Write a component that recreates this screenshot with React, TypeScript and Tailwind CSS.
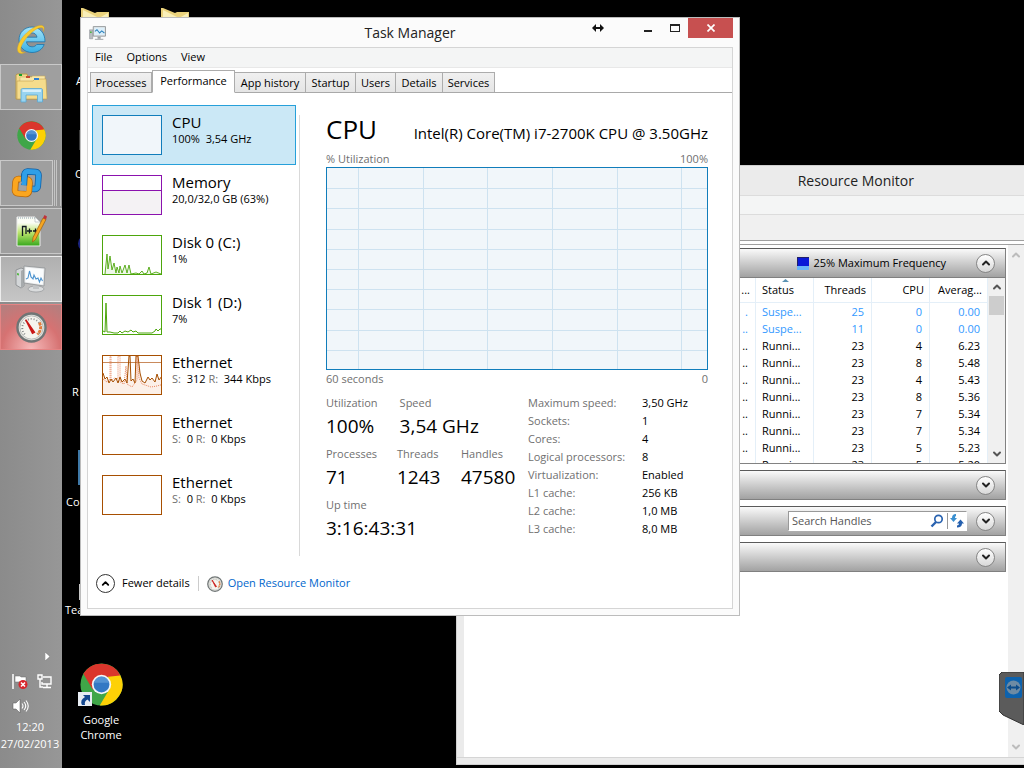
import type { ReactNode } from "react";
import { ChevronDown, ChevronUp } from "lucide-react";
import clsx from "clsx";

const MENU = ["File", "Options", "View"];

const TABS = [
  { label: "Processes", width: "w-[62px]" },
  { label: "Performance", width: "w-[83px]" },
  { label: "App history", width: "w-[71px]" },
  { label: "Startup", width: "w-[50px]" },
  { label: "Users", width: "w-10" },
  { label: "Details", width: "w-[47px]" },
  { label: "Services", width: "w-[52px]" },
];

const SPECS = [
  ["Maximum speed:", "3,50 GHz"],
  ["Sockets:", "1"],
  ["Cores:", "4"],
  ["Logical processors:", "8"],
  ["Virtualization:", "Enabled"],
  ["L1 cache:", "256 KB"],
  ["L2 cache:", "1,0 MB"],
  ["L3 cache:", "8,0 MB"],
];

const PROCESSES = [
  [".", "Suspe...", "25", "0", "0.00"],
  ["..", "Suspe...", "11", "0", "0.00"],
  ["..", "Runni...", "23", "4", "6.23"],
  ["..", "Runni...", "23", "8", "5.48"],
  ["..", "Runni...", "23", "4", "5.43"],
  ["..", "Runni...", "23", "8", "5.36"],
  ["..", "Runni...", "23", "7", "5.34"],
  ["..", "Runni...", "23", "7", "5.34"],
  ["..", "Runni...", "23", "5", "5.23"],
  ["..", "Runni...", "23", "5", "5.20"],
];

/* ---------- icons ---------- */

function IeIcon() {
  return (
    <svg width="30" height="32" viewBox="0 0 30 32">
      <defs>
        <linearGradient id="ie" x1="0" y1="0" x2="0" y2="1">
          <stop offset="0" stopColor="#a5e6fb" />
          <stop offset="1" stopColor="#3aafe4" />
        </linearGradient>
      </defs>
      <path
        d="M16 4C8.500 4 3 9.500 3 17c0 7.300 5.600 12.500 13 12.500 5.800 0 10.300-3 12.200-8h-7.500c-1 1.500-2.600 2.300-4.600 2.300-3.200 0-5.300-1.900-5.600-5H29C29.200 10.500 24 4 16 4Zm-5.300 10.200c.6-2.700 2.500-4.300 5.300-4.300 2.700 0 4.600 1.600 5 4.300Z"
        fill="url(#ie)"
        stroke="#1c75ac"
        strokeWidth=".8"
      />
      <path
        d="M27.500 8.500c1.600-4.300.1-6.600-3.700-6C17.500 3.300 8.500 10.300 4 18.200 1 23.600.6 28.500 3.400 30c1.600.8 3.800.4 6-.8-3 .6-4.900-.2-4.700-3C5 21.800 9.600 14.700 16 9.200c4.900-4.200 9.300-5.700 10.700-4.300.8.700.8 2 .8 3.600Z"
        fill="#f9cb2e"
        stroke="#d9a41c"
        strokeWidth=".4"
      />
    </svg>
  );
}

function ExplorerIcon() {
  return (
    <svg width="34" height="32" viewBox="0 0 34 32">
      <path d="M3 3h10l1 3h16v22H2V4Z" fill="#f3d98a" stroke="#b79a4c" />
      <path d="M6 6h12v-1h13v22H5Z" fill="#f9e7a8" stroke="#c9ad5e" strokeWidth=".6" />
      <path d="M3 10h16l2-2h11l1 20H3Z" fill="#f5dc8c" stroke="#bf9f4d" strokeWidth=".6" />
      <path d="M5 3h3v2H5Z" fill="#18a02c" />
      <path d="M12 5h4v2h-4Z" fill="#c94a32" />
      <path d="M20 7h5v2h-5Z" fill="#2e7fd0" />
      <path d="M7 19c0-1 .6-1.500 1.500-1.500h18.500c1 0 1.500.5 1.500 1.500v12h-5v-7H12v7H7Z" fill="#98d4f0" stroke="#5ba8d2" strokeWidth=".8" />
      <path d="M8.500 18.500h18.500v2.500H8.500Z" fill="#d5effb" />
    </svg>
  );
}

function ChromeIcon({ size }: { size: number }) {
  return (
    <svg width={size} height={size} viewBox="0 0 48 48">
      <circle cx="24" cy="24" r="23.500" fill="#3fa648" />
      <path d="M4 12A23.500 23.500 0 0 1 45 14H24L14 29Z" fill="#d93025" />
      <path d="M44.700 13A23.500 23.500 0 0 1 22 47.400L33 29 31 13Z" fill="#fdd106" />
      <path d="M4 12 14 29l5 2-3-14 28.700-3L43.500 12A23.500 23.500 0 0 0 4 12Z" fill="#da362c" />
      <circle cx="24" cy="24" r="10.800" fill="#f4f6f8" />
      <circle cx="24" cy="24" r="8.800" fill="#3378c4" />
      <path d="M15.500 22a8.800 8.800 0 0 1 17 0Z" fill="#6ba5dd" opacity=".6" />
    </svg>
  );
}

function VmwareIcon() {
  return (
    <svg width="32" height="32" viewBox="0 0 32 32" fill="none">
      <g transform="rotate(4 16 16)">
        <rect x="13" y="4.500" width="14" height="17" rx="3" stroke="#0d5fa6" strokeWidth="6.500" />
        <rect x="13" y="4.500" width="14" height="17" rx="3" stroke="#2f9fe8" strokeWidth="5" />
        <rect x="4.500" y="12.500" width="14" height="14.500" rx="3" stroke="#b8690c" strokeWidth="6.500" />
        <rect x="4.500" y="12.500" width="14" height="14.500" rx="3" stroke="#fba61f" strokeWidth="5" />
        <path d="M13 7v12" stroke="#0d5fa6" strokeWidth="6.500" />
        <path d="M13 6v12.500" stroke="#2f9fe8" strokeWidth="5" />
        <path d="M10 18.500h6V24h-7v-9h2" fill="#a3a3a3" />
      </g>
    </svg>
  );
}

function NotepadIcon() {
  return (
    <svg width="32" height="34" viewBox="0 0 32 34">
      <defs>
        <linearGradient id="npp" x1="0" y1="0" x2="0" y2="1">
          <stop offset=".2" stopColor="#fbfdf5" />
          <stop offset=".55" stopColor="#b9e36a" />
          <stop offset="1" stopColor="#35a71c" />
        </linearGradient>
      </defs>
      <path d="M2 3h18l5 5v24H2Z" fill="url(#npp)" stroke="#ececec" />
      <path d="M3 4h18" stroke="#8fa4b0" strokeDasharray="1 1" />
      <path d="M20 3v5h5Z" fill="#fff" stroke="#a9b4b4" strokeWidth=".6" />
      <path d="M7.500 22V12.500h3.500V20M12 17h5M14.500 14.500v5M18 17h5M20.500 14.500v5" stroke="#101820" strokeWidth="1.300" fill="none" />
      <path d="m17.500 28 .5-4.500L28 4l3 1.500L20.500 25.500Z" fill="#f4a622" stroke="#9a5e10" strokeWidth=".7" />
      <path d="m28 4 3 1.500 1-3L29.500 1Z" fill="#c0323b" />
    </svg>
  );
}

function TaskManagerIcon({ size }: { size: number }) {
  return (
    <svg width={size} height={size} viewBox="0 0 32 32">
      <path d="M1 9h6v17H1Z" fill="#b9bdc0" stroke="#777d80" strokeWidth=".8" />
      <path d="M2 12h3v3H2Z" fill="#46b53b" />
      <path d="M8 3h23v18H8Z" fill="#dfe3e5" stroke="#84898c" strokeWidth="1.500" />
      <path d="M10 5h19v14H10Z" fill="#dceffa" />
      <path d="m11 12 4-3 5 6 4-4 5 4" fill="none" stroke="#2d83bd" strokeWidth="2" />
      <path d="M16 22h6v4h-6Z" fill="#9ea3a6" />
      <path d="M11 26h16v2H11Z" fill="#a5aaad" />
    </svg>
  );
}

function ComputerIcon() {
  return (
    <svg width="32" height="28" viewBox="0 0 32 28">
      <path d="m1 5 5-2 3 1v17l-3 2-5-3Z" fill="#d3d6d8" stroke="#85898b" strokeWidth=".8" />
      <path d="m6 6 3-2v17l-3 2Z" fill="#a7abad" />
      <path d="m2 8 2 .5v2L2 10Z" fill="#58b947" />
      <path d="m9 1 21 2-1 18L9 18Z" fill="#e6e8e9" stroke="#8e9294" strokeWidth=".8" />
      <path d="m10.500 2.500 18 1.700-.8 15.300-17.200-2.500Z" fill="#fafcfd" />
      <path d="m11 14 2-1 1.500-7L16 12l2 2 1-4 2 4 2-1 1.500 4 1.500-4 1.500 3" fill="none" stroke="#4c93cf" strokeWidth="1.100" />
      <ellipse cx="21" cy="24" rx="8" ry="3" fill="#dadcdd" stroke="#93979a" strokeWidth=".7" />
      <path d="m18 20 6 1v3h-6Z" fill="#c1c4c6" />
    </svg>
  );
}

function GaugeIcon({ size }: { size: number }) {
  return (
    <svg width={size} height={size} viewBox="0 0 32 32">
      <circle cx="16" cy="16" r="14.500" fill="#e5e5e1" stroke="#6f7575" strokeWidth="2.500" />
      <circle cx="16" cy="16" r="12" fill="#f5f4ee" stroke="#b8bbb8" />
      <path d="M9 23a9.500 9.500 0 1 1 14 0" fill="none" stroke="#85898a" strokeWidth="2" strokeDasharray="1 2" />
      <path d="M24 11a9 9 0 0 1-2 12" fill="none" stroke="#e37b3b" strokeWidth="3" strokeDasharray="3 1" />
      <path d="m10 8 9 13-2 1Z" fill="#c91616" stroke="#c91616" strokeWidth="1.500" />
    </svg>
  );
}

function FolderTop() {
  return (
    <svg width="28" height="14" viewBox="0 0 28 14">
      <path d="M0 0h2l12 5 2-1h12v10H0Z" fill="#ead27c" />
      <path d="m2 2 16 8 9-5v9H2Z" fill="#f9efb9" />
    </svg>
  );
}

function TrayIcons() {
  return (
    <div className="grid grid-cols-[17px_17px] gap-x-[7px] gap-y-2 pl-3">
      <svg width="17" height="17" viewBox="0 0 17 17">
        <path d="M1 1v15" stroke="#fff" strokeWidth="1.500" />
        <path d="M3 3h5l1 1h5v7H9L8 9H3Z" fill="#fff" stroke="#686868" strokeWidth=".5" />
        <circle cx="11" cy="11.500" r="4.500" fill="#d8262c" />
        <path d="m9 9.500 4 4m0-4-4 4" stroke="#fff" strokeWidth="1.500" />
      </svg>
      <svg width="17" height="17" viewBox="0 0 17 17" fill="none" stroke="#fff" strokeWidth="1.400">
        <path d="M7 4h8v7H6V9M11 11v3M7 14.500h8M2 2h4v4H2ZM4 6v8h3" />
      </svg>
      <svg width="17" height="16" viewBox="0 0 17 16">
        <path d="M1 5h3l4-4v14l-4-4H1Z" fill="#fff" stroke="#555" strokeWidth=".5" />
        <path d="M10 5.500q2 2.500 0 5M12 4q3.500 4 0 8M14 2.500q4.500 5.500 0 11" fill="none" stroke="#fff" strokeWidth="1.100" />
      </svg>
    </div>
  );
}

/* ---------- taskbar ---------- */

function TaskButton({ label, look, children }: { label: string; look?: string; children: ReactNode }) {
  return (
    <button
      aria-label={label}
      className={clsx("flex h-[46px] w-full items-center justify-center border", look ?? "border-transparent")}
    >
      {children}
    </button>
  );
}

function Taskbar() {
  const open = "border-[#c9c9c9] bg-[#9f9f9f]";
  return (
    <aside className="flex w-[62px] shrink-0 flex-col justify-between bg-linear-to-r from-[#8b8b8b] to-[#979797]">
      <div className="flex flex-col gap-[2px] pt-4">
        <TaskButton label="Internet Explorer"><IeIcon /></TaskButton>
        <TaskButton label="File Explorer" look={open}><ExplorerIcon /></TaskButton>
        <TaskButton label="Google Chrome"><ChromeIcon size={29} /></TaskButton>
        <div className="flex gap-px pr-px">
          <div className="flex-1">
            <TaskButton label="VMware Workstation" look={open}><VmwareIcon /></TaskButton>
          </div>
          <div className="w-[3px] border-x border-[#c4c4c4]" />
          <div className="w-[3px] border-r border-[#c4c4c4]" />
        </div>
        <TaskButton label="Notepad++" look={open}><NotepadIcon /></TaskButton>
        <TaskButton label="Task Manager" look="border-[#ededed] bg-linear-to-b from-[#b0b0b0] to-[#c6c6c6]">
          <ComputerIcon />
        </TaskButton>
        <TaskButton
          label="Resource Monitor"
          look="border-[#e58484] bg-[radial-gradient(circle_at_50%_100%,#f6baba_0%,#d67272_55%,#b08080_100%)]"
        >
          <GaugeIcon size={31} />
        </TaskButton>
      </div>
      <div className="flex flex-col pb-4 text-center text-[11px] leading-[17px] text-white">
        <button aria-label="Show hidden icons" className="mr-3 mb-3 flex self-end">
          <svg width="5" height="9" viewBox="0 0 5 9"><path d="M0 0v9l5-4.500Z" fill="#fff" stroke="#555" strokeWidth=".4" /></svg>
        </button>
        <TrayIcons />
        <span className="mt-1 pr-[2px]">12:20</span>
        <span className="pr-[2px] whitespace-nowrap">27/02/2013</span>
      </div>
    </aside>
  );
}

/* ---------- task manager ---------- */

function Thumb({ color, children }: { color: string; children?: ReactNode }) {
  return (
    <svg width="60" height="40" viewBox="0 0 60 40" className="shrink-0">
      <rect x="0.500" y="0.500" width="59" height="39" fill="#fff" />
      {children}
      <rect x="0.500" y="0.500" width="59" height="39" fill="none" stroke={color} />
    </svg>
  );
}

const DISK0 = "M3 39 5 19 6 34 8 21 10 35 12 28 14 38 15 32 17 38 18 31 20 38 23 30 25 38 27 30 29 39 34 38 37 39 40 36 42 39 45 38 47 32 49 39 54 37 59 39";
const DISK1 = "M1 36 3 37 4 8 5 37 8 37 12 38 16 38 18 36 20 38 23 36 26 37 29 35 31 37 34 36 36 38 50 38 53 36 54 34 56 36 58 34 60 34";
const ETH = "M1 18 3 24 5 22 7 28 9 24 11 27 14 23 16 28 18 22 20 27 23 24 25 28 27 1 28 1 29 26 31 24 33 28 34 1 36 1 38 18 40 26 43 28 46 22 48 25 50 23 53 27 55 19 57 25 60 21";
const ETH_RX = "M1 24 5 27 8 24V1h1v25l3-3 4 1V1h2v26l4 2 2-18 1 18 5 3 5-7V1l2 22 3 6 9 3 6-1 7-2";

function SideItem({ title, detail, thumb, active }: { title: string; detail: ReactNode; thumb: ReactNode; active?: boolean }) {
  return (
    <button
      className={clsx(
        "flex h-15 w-full items-start gap-[10px] border px-[9px] pt-[9px] text-left",
        active ? "border-[#26a0da] bg-[#cbe8f6]" : "border-transparent",
      )}
    >
      {thumb}
      <span className="-mt-[3px] flex flex-col">
        <span className="text-[15px] leading-5">{title}</span>
        <span className="text-[11px] leading-[14px] whitespace-pre">{detail}</span>
      </span>
    </button>
  );
}

function Traffic({ sent, received }: { sent: string; received: string }) {
  return (
    <>
      <span className="text-[#707070]">S:</span>{"  "}{sent} <span className="text-[#707070]">R:</span>{"  "}{received} Kbps
    </>
  );
}

function Stat({ label, value }: { label: string; value: string }) {
  return (
    <div>
      <dt className="text-[11px] leading-[18px] text-[#707070]">{label}</dt>
      <dd className="text-[19px] leading-7">{value}</dd>
    </div>
  );
}

function UtilizationChart() {
  const rows = [1, 2, 3, 4, 5, 6, 7, 8, 9];
  const cols = [31, 96, 160, 225, 290, 354];
  return (
    <svg
      viewBox="0 0 380 201"
      preserveAspectRatio="none"
      shapeRendering="crispEdges"
      className="block h-[203px] w-full border border-[#117dbb] bg-[#f1f6fa]"
    >
      {rows.map((r) => (
        <rect key={r} x="0" y={Math.round(r * 20.2)} width="380" height="1" fill="#cee2f0" />
      ))}
      {cols.map((x) => (
        <rect key={x} x={x} y="0" width="1" height="201" fill="#cee2f0" />
      ))}
    </svg>
  );
}

function CpuPane() {
  return (
    <section className="flex-1 pt-2 pr-6 pl-[26px]">
      <header className="flex items-baseline justify-between">
        <h2 className="text-[26px] leading-8">CPU</h2>
        <span className="text-[15px] whitespace-nowrap">Intel(R) Core(TM) i7-2700K CPU @ 3.50GHz</span>
      </header>
      <div className="flex justify-between pt-[5px] text-[11px] leading-[17px] text-[#707070]">
        <span>% Utilization</span>
        <span>100%</span>
      </div>
      <UtilizationChart />
      <div className="flex justify-between text-[11px] leading-[18px] text-[#707070]">
        <span>60 seconds</span>
        <span>0</span>
      </div>
      <div className="flex items-start pt-[6px]">
        <dl className="flex flex-1 flex-col gap-[5px]">
          <div className="flex gap-[22px]">
            <Stat label="Utilization" value="100%" />
            <Stat label="Speed" value="3,54 GHz" />
          </div>
          <div className="grid grid-cols-[71px_64px_auto]">
            <Stat label="Processes" value="71" />
            <Stat label="Threads" value="1243" />
            <Stat label="Handles" value="47580" />
          </div>
          <Stat label="Up time" value="3:16:43:31" />
        </dl>
        <dl className="grid grid-cols-[114px_66px] text-[11px] leading-[18px] whitespace-nowrap">
          {SPECS.map(([name, value]) => (
            <div key={name} className="col-span-2 grid grid-cols-subgrid">
              <dt className="text-[#707070]">{name}</dt>
              <dd>{value}</dd>
            </div>
          ))}
        </dl>
      </div>
    </section>
  );
}

function TaskManager() {
  return (
    <main className="absolute top-[17px] right-[284px] left-[18px] border border-[#bcbcbc] bg-[#fbfbfb] px-[6px] pb-[6px]">
      <header className="grid h-[29px] grid-cols-[1fr_auto_1fr]">
        <span className="pt-[7px] pl-[2px]"><TaskManagerIcon size={17} /></span>
        <h1 className="pt-[5px] text-[14px] leading-5 text-[#222]">Task Manager</h1>
        <div className="flex h-5 items-center justify-end">
          <button aria-label="Move" className="mr-[30px]">
            <svg width="12" height="8" viewBox="0 0 12 8"><path d="M0 4 4 0v3h4V0l4 4-4 4V5H4v3Z" fill="#111" /></svg>
          </button>
          <button aria-label="Minimize" className="flex h-5 w-[27px] items-center justify-center pt-[6px]">
            <span className="h-[2px] w-2 bg-[#222]" />
          </button>
          <button aria-label="Maximize" className="flex h-5 w-[27px] items-center justify-center">
            <span className="h-2 w-[10px] border border-t-2 border-[#222]" />
          </button>
          <button aria-label="Close" className="flex h-5 w-[45px] items-center justify-center bg-[#c75050]">
            <svg width="8" height="8" viewBox="0 0 8 8"><path d="m0.500 0.500 7 7m0-7-7 7" stroke="#fff" strokeWidth="1.700" /></svg>
          </button>
        </div>
      </header>
      <div className="border border-[#d5d5d5] bg-white">
        <nav className="flex h-5 items-center border-b border-[#e8e8e8] bg-[#f4f5f5] text-[11px]">
          {MENU.map((item) => (
            <button key={item} className="px-[7px]">{item}</button>
          ))}
        </nav>
        <div className="flex h-[25px] items-end border-b border-[#a9a9a9] pl-[2px]" role="tablist">
          {TABS.map(({ label, width }) => {
            const selected = label === "Performance";
            return (
              <button
                key={label}
                role="tab"
                aria-selected={selected}
                className={clsx(
                  "flex shrink-0 justify-center border border-[#acacac] text-[11px] leading-5 whitespace-nowrap",
                  width,
                  selected ? "-mb-px h-[23px] border-b-white bg-white" : "h-5 border-b-0 border-l-0 bg-linear-to-b from-[#f0f0f0] to-[#e5e5e5] first:border-l",
                )}
              >
                {label}
              </button>
            );
          })}
        </div>
        <div className="flex pt-3">
          <div className="ml-1 w-[204px] shrink-0">
            <SideItem
              active
              title="CPU"
              detail="100%  3,54 GHz"
              thumb={<Thumb color="#117dbb"><path d="M1 1h58v38H1Z" fill="#f1f6fa" /></Thumb>}
            />
            <SideItem
              title="Memory"
              detail="20,0/32,0 GB (63%)"
              thumb={
                <Thumb color="#8b12ae">
                  <path d="M1 15h58v24H1Z" fill="#f4f2f4" />
                  <path d="M1 15.500h58" stroke="#8b12ae" />
                </Thumb>
              }
            />
            <SideItem
              title="Disk 0 (C:)"
              detail="1%"
              thumb={<Thumb color="#4da60c"><path d={DISK0} fill="#eff7e9" stroke="#4da60c" strokeWidth=".9" /></Thumb>}
            />
            <SideItem
              title="Disk 1 (D:)"
              detail="7%"
              thumb={<Thumb color="#4da60c"><path d={DISK1} fill="none" stroke="#4da60c" /></Thumb>}
            />
            <SideItem
              title="Ethernet"
              detail={<Traffic sent="312" received="344" />}
              thumb={
                <Thumb color="#a74f01">
                  <path d={`${ETH}V39H1Z`} fill="#fcf0e8" />
                  <path d="M1 7.500h58" stroke="#c98a5c" />
                  <path d={ETH_RX} fill="none" stroke="#e8835c" strokeDasharray="1 1" />
                  <path d={ETH} fill="none" stroke="#a74f01" />
                </Thumb>
              }
            />
            <SideItem title="Ethernet" detail={<Traffic sent="0" received="0" />} thumb={<Thumb color="#a74f01" />} />
            <SideItem title="Ethernet" detail={<Traffic sent="0" received="0" />} thumb={<Thumb color="#a74f01" />} />
          </div>
          <div className="mt-[10px] ml-[3px] h-[441px] w-px bg-[#d9d9d9]" />
          <CpuPane />
        </div>
        <footer className="flex h-[52px] items-center pt-[3px] pl-2 text-[11px]">
          <button className="flex items-center gap-[7px]">
            <span className="flex size-[19px] items-center justify-center rounded-full border border-[#333]">
              <ChevronUp size={11} strokeWidth={4} />
            </span>
            Fewer details
          </button>
          <span className="mx-2 h-[15px] w-px bg-[#ccc]" />
          <a href="#resource-monitor" className="flex items-center gap-[5px] text-[#0066cc]">
            <GaugeIcon size={16} />
            Open Resource Monitor
          </a>
        </footer>
      </div>
    </main>
  );
}

/* ---------- resource monitor ---------- */

function PanelBar({ label, expanded, children }: { label: string; expanded?: boolean; children?: ReactNode }) {
  const Icon = expanded ? ChevronUp : ChevronDown;
  return (
    <div className="flex h-[30px] items-center justify-end border border-[#808080] border-t-[#5a5a5a] bg-linear-to-b from-[#fafafa] to-[#a2a2a2] pr-[10px]">
      {children}
      <button
        aria-label={label}
        className="flex size-[19px] items-center justify-center rounded-full border border-[#858585] bg-linear-to-b from-white to-[#d8d8d8]"
      >
        <Icon size={12} strokeWidth={4} color="#222" />
      </button>
    </div>
  );
}

function ProcessTable() {
  return (
    <div className="flex h-[186px] overflow-hidden border border-t-0 border-[#828282] bg-white">
      <table className="w-full flex-1 table-fixed border-collapse text-right text-[11px]">
        <colgroup>
          <col />
          <col className="w-[58px]" />
          <col className="w-[58px]" />
          <col className="w-[58px]" />
          <col className="w-[58px]" />
        </colgroup>
        <thead>
          <tr className="h-6 border-b border-[#e4eff8] *:border-r *:border-[#e4eff8] *:pr-[5px] *:font-normal">
            <th>...</th>
            <th className="relative pl-[6px] text-left">
              Status
              <svg width="7" height="3" viewBox="0 0 7 3" className="absolute top-px left-[26px]"><path d="M0 3 3.500 0 7 3Z" fill="#5b93b3" /></svg>
            </th>
            <th>Threads</th>
            <th>CPU</th>
            <th>Averag...</th>
          </tr>
        </thead>
        <tbody>
          {PROCESSES.map((row, i) => (
            <tr key={i} className={clsx("h-[17px] leading-[17px]", i < 2 && "text-[#3399ff]")}>
              {row.map((cell, c) => (
                <td key={c} className={clsx("border-r border-[#e4eff8]", c === 1 ? "pl-[6px] text-left" : "pr-[7px]")}>
                  {cell}
                </td>
              ))}
            </tr>
          ))}
        </tbody>
      </table>
      <div className="flex w-[17px] shrink-0 flex-col items-center bg-[#f0f0f0]">
        <ChevronUp size={12} strokeWidth={4} color="#555" className="my-[3px]" />
        <div className="h-[19px] w-[15px] bg-[#cdcdcd]" />
        <ChevronDown size={12} strokeWidth={4} color="#555" className="mt-auto mb-[3px]" />
      </div>
    </div>
  );
}

function ResourceMonitor() {
  return (
    <section
      id="resource-monitor"
      className="absolute top-[165px] right-0 bottom-[3px] left-[394px] flex flex-col border-y border-l border-[#d0d0d0] bg-[#ebebeb] pb-[7px] pl-[7px]"
    >
      <h2 className="pr-[110px] text-right text-[14px] leading-[29px] text-[#222]">Resource Monitor</h2>
      <div className="h-5 border-y border-[#dcdcdc] bg-[#f4f5f5]" />
      <div className="h-[26px] border-b border-[#a0a0a0] bg-[#f0f0f0]" />
      <div className="h-[3px] bg-white" />
      <div className="flex min-h-0 flex-1 border-t border-[#a0a0a0] bg-white">
        <div className="flex flex-1 flex-col gap-[6px] pt-[3px] pr-[2px] pl-2">
          <div>
            <PanelBar label="Collapse CPU" expanded>
              <svg width="12" height="13" viewBox="0 0 12 13" className="mr-1">
                <path d="M0 0h12v13H0Z" fill="#6ab4f8" />
                <path d="M0 0h12v9H0Z" fill="#0a18d8" />
                <path d="M0 .5h12M.5 0v9" stroke="#20206a" />
              </svg>
              <span className="mr-[30px] text-[11px]">25% Maximum Frequency</span>
            </PanelBar>
            <ProcessTable />
          </div>
          <PanelBar label="Expand services" />
          <PanelBar label="Expand associated handles">
            <div className="mr-[9px] flex h-5 w-[179px] items-center border border-[#999] border-r-white border-b-white bg-white">
              <input
                aria-label="Search Handles"
                placeholder="Search Handles"
                className="min-w-0 flex-1 pl-[3px] text-[11px] outline-none placeholder:text-[#555]"
              />
              <button aria-label="Search" className="mr-[3px]">
                <svg width="14" height="14" viewBox="0 0 14 14" fill="none" stroke="#2a63b0">
                  <circle cx="8.500" cy="5" r="3.700" strokeWidth="1.700" />
                  <path d="m6 8-4.500 4.500" strokeWidth="2.400" />
                </svg>
              </button>
              <span className="h-4 w-px bg-[#999]" />
              <button aria-label="Refresh" className="mx-[2px]">
                <svg width="14" height="14" viewBox="0 0 14 14">
                  <path d="M6 0v2q-1 0-1 2h2L3.500 8 0 4h2q0-4 4-4Z" fill="#3a8fd0" />
                  <path d="M7 13.500v-2q2 0 2-2H7L10.500 5.500 14 9.500h-2q0 4-5 4Z" fill="#245fae" />
                </svg>
              </button>
            </div>
          </PanelBar>
          <PanelBar label="Expand associated modules" />
        </div>
        <div className="flex w-4 flex-col items-center justify-between bg-[#f0f0f0] py-1 text-[#bcbcbc]">
          <ChevronUp size={12} strokeWidth={4} />
          <ChevronDown size={12} strokeWidth={4} />
        </div>
      </div>
      <div className="absolute right-0 bottom-0 left-0 h-[7px] border-t border-[#d5d5d5]" />
    </section>
  );
}

/* ---------- desktop ---------- */

function Desktop() {
  return (
    <div className="relative flex-1 overflow-hidden bg-black">
      <div className="absolute top-2 left-[19px] flex gap-[52px]">
        <FolderTop />
        <FolderTop />
      </div>
      {/* shortcuts mostly hidden behind the windows */}
      <div className="absolute top-[130px] left-[17px] h-5 w-10 bg-[#3a3a3a]" />
      <div className="absolute top-[235px] left-4 h-[17px] w-10 rounded-full bg-[#1b2480]" />
      <div className="absolute top-[450px] left-4 h-[35px] w-10 bg-[#3f79a8]" />
      <div className="absolute top-[584px] left-[17px] h-4 w-10 bg-[#c8c8c8]" />
      <div className="text-[11px] leading-4 text-white">
        <span className="absolute top-[73px] left-[14px]">A</span>
        <span className="absolute top-[166px] left-[13px]">C</span>
        <span className="absolute top-[384px] left-[10px]">R</span>
        <span className="absolute top-[494px] left-1">Co</span>
        <span className="absolute top-[602px] left-[3px]">Tea</span>
      </div>
      <a href="#chrome" className="absolute top-[663px] left-[7px] flex w-16 flex-col items-center text-center text-[11px] leading-[15px] text-white">
        <span className="relative mb-[6px]">
          <ChromeIcon size={43} />
          <svg width="14" height="14" viewBox="0 0 14 14" className="absolute bottom-0 -left-[2px]">
            <path d="M0 0h14v14H0Z" fill="#e8edf3" />
            <path d="M5 3h7v7L9.500 7.500Q6 9 7 13H4Q1.500 8 7 5Z" fill="#14488f" />
          </svg>
        </span>
        Google Chrome
      </a>
      <ResourceMonitor />
      <TaskManager />
      <button aria-label="TeamViewer" className="absolute right-0 bottom-[43px]">
        <svg width="25" height="53" viewBox="0 0 25 53">
          <path d="M25 0H3L0 3v36l4 4 21 10Z" fill="#5b5b5b" stroke="#333" />
          <rect x="6" y="5" width="17" height="21" rx="2" fill="#0d62ad" />
          <circle cx="14.500" cy="15.500" r="7" fill="#6d8ba4" />
          <path d="m8 15.500 4-3v2h5v-2l4 3-4 3v-2h-5v2Z" fill="#0c4c8a" />
        </svg>
      </button>
    </div>
  );
}

export default function App() {
  return (
    <div className="flex h-screen overflow-hidden font-['Open_Sans','Noto_Sans',sans-serif] text-black">
      <Taskbar />
      <Desktop />
    </div>
  );
}
